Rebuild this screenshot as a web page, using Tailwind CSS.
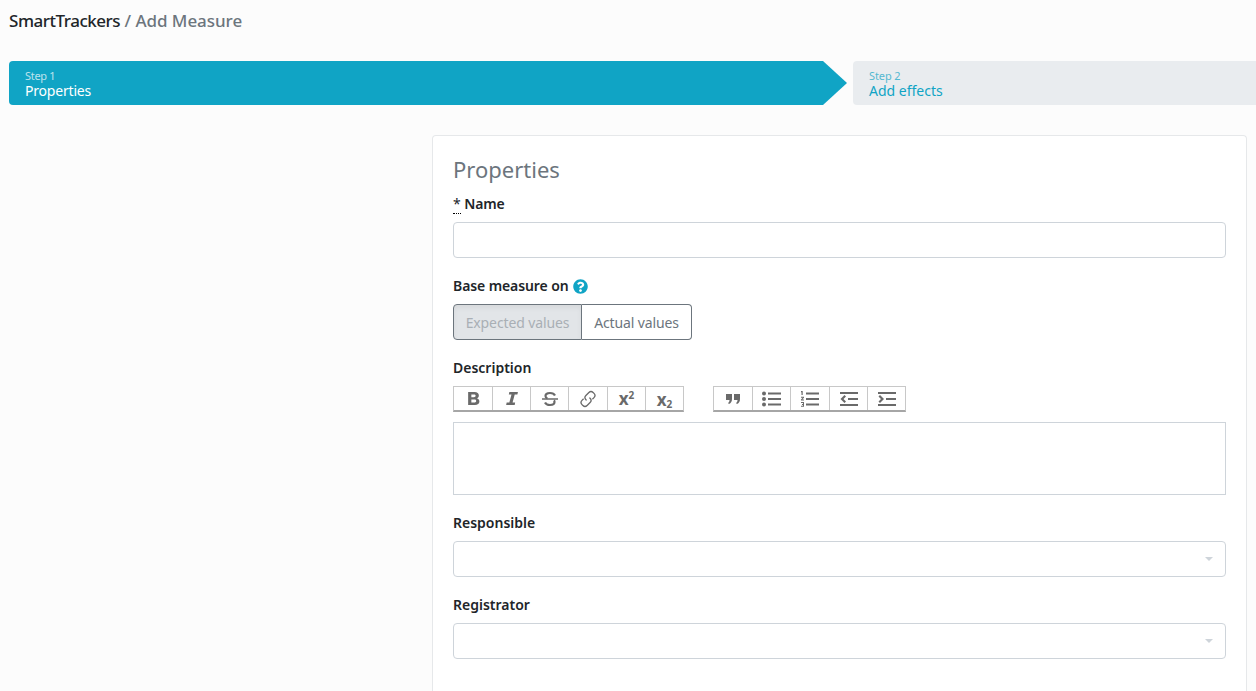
<!DOCTYPE html>
<html lang="en">
  <head>
    <meta charset="UTF-8" />
    <title>Add Measure</title>
    <script src="https://cdn.jsdelivr.net/npm/@tailwindcss/browser@4"></script>
  </head>
  <body class="bg-[#fcfcfc] h-[691px] overflow-hidden font-['Noto_Sans',sans-serif] text-[#212529]">
    <!-- Title -->
    <h1 class="h-[61px] pl-[9px] pt-[8px] text-[17px] leading-[26px] font-medium">
      <span class="tracking-[-0.47px]">SmartTrackers</span> <span class="text-[#6c757d] tracking-[-0.05px]">/ Add Measure</span>
    </h1>

    <!-- Steps -->
    <div class="flex h-[44px] pl-[9px]">
      <div class="flex w-[838px] shrink-0">
        <div class="flex-1 bg-[#10a4c5] rounded-l-[4px] pl-[16px] pt-[8px] text-white">
          <div class="text-[11px] leading-[14px] opacity-70 tracking-[-0.3px]">Step 1</div>
          <div class="text-[14px] leading-[16px] tracking-[-0.2px]">Properties</div>
        </div>
        <svg width="24" height="44" viewBox="0 0 24 44" class="shrink-0"><path d="M0 0L24 22L0 44Z" fill="#10a4c5" /></svg>
      </div>
      <div class="flex-1 ml-[6px] bg-[#e9ecef] rounded-l-[4px] pl-[16px] pt-[8px] text-[#10a4c5]">
        <div class="text-[11px] leading-[14px] opacity-70 tracking-[-0.1px]">Step 2</div>
        <div class="text-[14px] leading-[16px]">Add effects</div>
      </div>
    </div>

    <!-- Card -->
    <div class="ml-[432px] mr-[9px] mt-[30px] h-[556px] bg-white border border-b-0 border-[#e6e8ea] rounded-t-[4px] px-[20px] pt-[18px]">
      <h2 class="text-[22px] leading-[30px] text-[#6c757d]">Properties</h2>

      <label class="block mt-[10px] text-[14px] leading-[20px] font-semibold tracking-[-0.1px]">
        <span class="border-b border-dotted border-black font-normal">*</span> Name
      </label>
      <input class="block mt-[8px] w-full h-[36px] border border-[#ced4da] rounded-[4px] bg-white" />

      <label class="flex items-center gap-[4px] mt-[18px] text-[14px] leading-[20px] font-semibold tracking-[-0.1px]">
        Base measure on
        <svg width="15" height="15" viewBox="0 0 512 512"><path fill="#10a4c5" d="M504 256c0 137-111 248-248 248S8 393 8 256 119 8 256 8s248 111 248 248zM263 90c-54 0-89 23-116 64-4 5-3 12 3 16l35 26c5 4 13 3 17-2 18-23 30-36 58-36 21 0 47 13 47 34 0 15-13 23-34 35-25 14-57 31-57 74v6c0 7 5 12 12 12h56c7 0 12-5 12-12v-4c0-30 87-31 87-111 0-60-62-102-120-102zm-7 256c-26 0-48 22-48 48s22 48 48 48 48-22 48-48-22-48-48-48z" /></svg>
      </label>
      <div class="flex mt-[8px] w-[239px] h-[36px] text-[14px]">
        <div class="w-[129px] flex items-center justify-center bg-[#e2e5e8] border border-[#6c757d] rounded-l-[4px] text-[#a9afb5] tracking-[-0.12px] shadow-[inset_0_3px_5px_rgba(0,0,0,0.05)]">Expected values</div>
        <div class="flex-1 flex items-center justify-center bg-white border border-l-0 border-[#6c757d] rounded-r-[4px] text-[#6c757d] tracking-[-0.12px]">Actual values</div>
      </div>

      <label class="block mt-[18px] text-[14px] leading-[20px] font-semibold">Description</label>
      <div class="flex gap-[29px] mt-[8px] h-[26px] text-[#6a6a6a]">
        <div class="flex border border-[#c8c8c8] border-b-2 border-b-[#a6a6a6]">
          <button class="w-[39px] flex items-center justify-center border-r border-[#c8c8c8]">
            <svg width="15" height="15" viewBox="0 0 14 14"><path fill="currentColor" fill-rule="evenodd" d="M2 1h6c2.500 0 4 1.300 4 3.300 0 1.200-.6 2.100-1.600 2.600 1.300.4 2.100 1.400 2.100 2.800 0 2.100-1.600 3.300-4.200 3.300H2zm3 2.300v2.500h2.400c1 0 1.600-.5 1.600-1.300s-.6-1.200-1.600-1.200zm0 4.700v2.700h2.700c1.100 0 1.800-.5 1.800-1.400S8.800 8 7.700 8z" /></svg>
          </button>
          <button class="w-[38px] flex items-center justify-center border-r border-[#c8c8c8]">
            <svg width="15" height="15" viewBox="0 0 14 14"><path fill="currentColor" d="M5 1h8l-.5 2.200H10L8 10.800h2.400L10 13H2l.5-2.200H5L7 3.200H4.500z" /></svg>
          </button>
          <button class="w-[38px] flex items-center justify-center border-r border-[#c8c8c8]">
            <svg width="18" height="16" viewBox="0 0 18 16" fill="none" stroke="currentColor"><path stroke-width="1.500" d="M1 8h16" /><path stroke-width="2.200" d="M14 4.500C13 2.500 11 2 9 2 6.500 2 4.500 3 4.500 5c0 1 .5 2 2 2.500M4 11.500C5 13.500 7 14 9 14c2.500 0 4.500-1 4.500-3 0-.6-.2-1.200-.6-1.600" /></svg>
          </button>
          <button class="w-[39px] flex items-center justify-center border-r border-[#c8c8c8]">
            <svg width="18" height="18" viewBox="0 0 18 18" fill="none" stroke="currentColor" stroke-width="1.300"><path d="M7.600 10.400l-.7-.7a3 3 0 0 1 0-4.200l3-3a3 3 0 0 1 4.200 0l.9.900a3 3 0 0 1 0 4.200l-1.600 1.600" /><path d="M10.400 7.600l.7.7a3 3 0 0 1 0 4.200l-3 3a3 3 0 0 1-4.200 0l-.9-.9a3 3 0 0 1 0-4.200l1.600-1.600" /></svg>
          </button>
          <button class="w-[38px] flex items-start justify-center pt-[2px] border-r border-[#c8c8c8] text-[17px] font-bold leading-[20px]">x<span class="text-[10px] leading-[12px]">2</span></button>
          <button class="w-[37px] flex items-end justify-center text-[17px] font-bold leading-[20px]">x<span class="text-[10px] leading-[11px]">2</span></button>
        </div>
        <div class="flex border border-[#c8c8c8] border-b-2 border-b-[#a6a6a6]">
          <button class="w-[39px] flex items-center justify-center border-r border-[#c8c8c8]">
            <svg width="14" height="12" viewBox="0 0 14 12"><path fill="currentColor" d="M0 1h6v5c0 2.500-1 4-3 5l-1-1c1-.6 1.500-1.500 1.500-3H0zM8 1h6v5c0 2.500-1 4-3 5l-1-1c1-.6 1.500-1.500 1.500-3H8z" /></svg>
          </button>
          <button class="w-[38px] flex items-center justify-center border-r border-[#c8c8c8]">
            <svg width="20" height="16" viewBox="0 0 20 16"><g fill="currentColor"><circle cx="2" cy="2.500" r="2" /><circle cx="2" cy="8" r="2" /><circle cx="2" cy="13.500" r="2" /><rect x="6" y="1.500" width="13" height="2" /><rect x="6" y="7" width="13" height="2" /><rect x="6" y="12.500" width="13" height="2" /></g></svg>
          </button>
          <button class="w-[39px] flex items-center justify-center border-r border-[#c8c8c8]">
            <svg width="20" height="16" viewBox="0 0 20 16"><g fill="currentColor"><rect x="6" y="1.500" width="13" height="2" /><rect x="6" y="7" width="13" height="2" /><rect x="6" y="12.500" width="13" height="2" /><path d="M1.500 0h1.200v4H1.500V1.200H1V0zM1 5.800h3v1L2.300 8.500H4v1H1v-1l1.700-1.700H1zM1 11h3v4.800H1v-1h2v-.9H2v-.9h1v-1H1z" /></g></svg>
          </button>
          <button class="w-[38px] flex items-center justify-center border-r border-[#c8c8c8]">
            <svg width="20" height="16" viewBox="0 0 20 16" fill="currentColor"><rect x="1" y="1" width="18" height="2" /><rect x="9" y="7" width="10" height="2" /><rect x="1" y="13" width="18" height="2" /><path d="M5.500 4L7 5.500 4.500 8 7 10.500 5.500 12l-4-4z" /></svg>
          </button>
          <button class="w-[37px] flex items-center justify-center">
            <svg width="20" height="16" viewBox="0 0 20 16" fill="currentColor"><rect x="1" y="1" width="18" height="2" /><rect x="9" y="7" width="10" height="2" /><rect x="1" y="13" width="18" height="2" /><path d="M3 4L1.500 5.500 4 8l-2.500 2.500L3 12l4-4z" /></svg>
          </button>
        </div>
      </div>
      <div class="mt-[10px] h-[73px] border border-[#ced4da] bg-white"></div>

      <label class="block mt-[18px] text-[14px] leading-[20px] font-semibold">Responsible</label>
      <div class="flex items-center justify-end mt-[8px] h-[36px] border border-[#ced4da] rounded-[4px] bg-white pr-[12px]">
        <span class="w-0 h-0 border-x-[4px] border-x-transparent border-t-[4px] border-t-[#ced4da]"></span>
      </div>

      <label class="block mt-[18px] text-[14px] leading-[20px] font-semibold">Registrator</label>
      <div class="flex items-center justify-end mt-[8px] h-[36px] border border-[#ced4da] rounded-[4px] bg-white pr-[12px]">
        <span class="w-0 h-0 border-x-[4px] border-x-transparent border-t-[4px] border-t-[#ced4da]"></span>
      </div>
    </div>
  </body>
</html>
